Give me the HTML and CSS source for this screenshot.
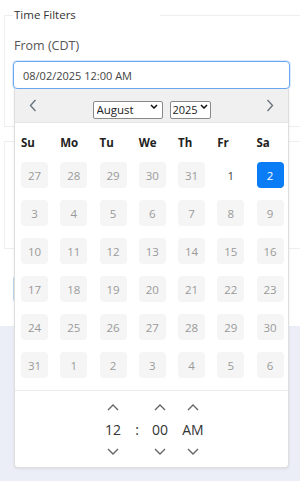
FILE: index.html
```html
<!DOCTYPE html>
<html lang="en">
<head>
    <meta charset="UTF-8">
    <meta name="viewport" content="width=device-width, initial-scale=1.0">
    <title>Time Filters</title>
    <link rel="stylesheet" href="styles.css">
</head>
<body>
    <div class="page">
        <fieldset class="filters">
            <legend>Time Filters</legend>
            <label class="field-label" for="fromDate">From (CDT)</label>
            <div class="picker">
                <input type="text" id="fromDate" class="date-input" value="08/02/2025 12:00 AM">

                <div class="popup">
                    <div class="popup-head">
                        <button type="button" class="nav prev">
                            <svg width="8" height="13" viewBox="0 0 8 13"><path d="M6.5 1 L1.5 6.5 L6.5 12" fill="none" stroke="#6c757d" stroke-width="1.4"/></svg>
                        </button>
                        <div class="selects">
                            <span class="select-wrap month">
                                <select>
                                    <option>August</option>
                                </select>
                                <svg class="caret" width="8" height="5" viewBox="0 0 8 5"><path d="M1 1 L4 4 L7 1" fill="none" stroke="#111" stroke-width="1.5"/></svg>
                            </span>
                            <span class="select-wrap year">
                                <select>
                                    <option>2025</option>
                                </select>
                                <svg class="caret" width="8" height="5" viewBox="0 0 8 5"><path d="M1 1 L4 4 L7 1" fill="none" stroke="#111" stroke-width="1.5"/></svg>
                            </span>
                        </div>
                        <button type="button" class="nav next">
                            <svg width="8" height="13" viewBox="0 0 8 13"><path d="M1.5 1 L6.5 6.5 L1.5 12" fill="none" stroke="#6c757d" stroke-width="1.4"/></svg>
                        </button>
                    </div>

                    <div class="weekdays">
                        <span>Su</span><span>Mo</span><span>Tu</span><span>We</span><span>Th</span><span>Fr</span><span>Sa</span>
                    </div>

                    <div class="days">
                        <span class="day off">27</span><span class="day off">28</span><span class="day off">29</span><span class="day off">30</span><span class="day off">31</span><span class="day">1</span><span class="day picked">2</span>
                        <span class="day off">3</span><span class="day off">4</span><span class="day off">5</span><span class="day off">6</span><span class="day off">7</span><span class="day off">8</span><span class="day off">9</span>
                        <span class="day off">10</span><span class="day off">11</span><span class="day off">12</span><span class="day off">13</span><span class="day off">14</span><span class="day off">15</span><span class="day off">16</span>
                        <span class="day off">17</span><span class="day off">18</span><span class="day off">19</span><span class="day off">20</span><span class="day off">21</span><span class="day off">22</span><span class="day off">23</span>
                        <span class="day off">24</span><span class="day off">25</span><span class="day off">26</span><span class="day off">27</span><span class="day off">28</span><span class="day off">29</span><span class="day off">30</span>
                        <span class="day off">31</span><span class="day off">1</span><span class="day off">2</span><span class="day off">3</span><span class="day off">4</span><span class="day off">5</span><span class="day off">6</span>
                    </div>

                    <div class="time">
                        <div class="time-col hour">
                            <svg class="arrow" width="12" height="7" viewBox="0 0 12 7"><path d="M1 6 L6 1 L11 6" fill="none" stroke="#666" stroke-width="1.4"/></svg>
                            <span>12</span>
                            <svg class="arrow" width="12" height="7" viewBox="0 0 12 7"><path d="M1 1 L6 6 L11 1" fill="none" stroke="#666" stroke-width="1.4"/></svg>
                        </div>
                        <div class="colon">:</div>
                        <div class="time-col minute">
                            <svg class="arrow" width="12" height="7" viewBox="0 0 12 7"><path d="M1 6 L6 1 L11 6" fill="none" stroke="#666" stroke-width="1.4"/></svg>
                            <span>00</span>
                            <svg class="arrow" width="12" height="7" viewBox="0 0 12 7"><path d="M1 1 L6 6 L11 1" fill="none" stroke="#666" stroke-width="1.4"/></svg>
                        </div>
                        <div class="time-col ampm">
                            <svg class="arrow" width="12" height="7" viewBox="0 0 12 7"><path d="M1 6 L6 1 L11 6" fill="none" stroke="#666" stroke-width="1.4"/></svg>
                            <span>AM</span>
                            <svg class="arrow" width="12" height="7" viewBox="0 0 12 7"><path d="M1 1 L6 6 L11 1" fill="none" stroke="#666" stroke-width="1.4"/></svg>
                        </div>
                    </div>
                </div>
            </div>
        </fieldset>

        <div class="card"></div>
        <div class="apply-row"><div class="ghost-btn"></div></div>
    </div>
    <div class="lower"></div>
</body>
</html>
```

FILE: styles.css
```css
html, body {
    margin: 0;
    padding: 0;
}
body {
    font-family: 'Open Sans', sans-serif;
    color: #333;
    background-color: #eceef7;
    overflow: hidden;
}
.page {
    background-color: #fff;
    padding-top: 8px;
    height: 318px;
    position: relative;
    z-index: 2;
}
.lower {
    height: 155px;
}
.filters {
    margin: 0 0 0 4px;
    padding: 0 0 37px 8px;
    border: 1px solid #eeeeee;
    border-right: none;
    min-width: 0;
}
.filters legend {
    width: 146px;
    padding: 0 0 0 1px;
    font-size: 11.5px;
    line-height: 14px;
    color: #333;
}
.field-label {
    display: block;
    margin: 15px 0 6px 1px;
    font-size: 12.5px;
    line-height: 18px;
    color: #555;
}
.picker {
    position: relative;
    width: 277px;
}
.date-input {
    display: block;
    box-sizing: border-box;
    width: 277px;
    height: 28px;
    margin: 0;
    padding: 0 9px;
    border: 1px solid #6aa8f2;
    border-radius: 4px;
    box-shadow: 0 0 0 1px rgba(106, 168, 242, 0.25);
    font-family: 'Open Sans', sans-serif;
    font-size: 11px;
    color: #444;
    outline: none;
}
.popup {
    position: absolute;
    top: 28px;
    left: 1px;
    z-index: 5;
    box-sizing: border-box;
    width: 275px;
    height: 379px;
    background-color: #fff;
    border: 1px solid #dedede;
    border-top: none;
    border-radius: 0 0 4px 4px;
    box-shadow: 0 1px 3px rgba(0, 0, 0, 0.08);
}
.popup-head {
    height: 34px;
    display: flex;
    align-items: center;
    justify-content: space-between;
    padding: 0 12px 0 12px;
    background-color: #f0f0f0;
    border-bottom: 1px solid #e6e6e6;
    box-sizing: border-box;
}
.nav {
    border: none;
    background: none;
    padding: 0 2px;
    display: flex;
    align-items: center;
}
.selects {
    display: flex;
    gap: 7px;
    padding-top: 1px;
}
.select-wrap {
    position: relative;
    display: block;
    height: 18px;
}
.select-wrap select {
    -webkit-appearance: none;
    appearance: none;
    width: 100%;
    height: 18px;
    box-sizing: border-box;
    margin: 0;
    font-family: 'Open Sans', sans-serif;
    font-size: 11.5px;
    line-height: 16px;
    color: #222;
    border: 1px solid #8a8a8a;
    border-radius: 2px;
    background-color: #fff;
    padding: 0 12px 0 3px;
    outline: none;
}
.caret {
    position: absolute;
    right: 5px;
    top: 7px;
    pointer-events: none;
}
.select-wrap.month {
    width: 70px;
}
.select-wrap.year {
    width: 41px;
}
.select-wrap.year select {
    padding: 0 9px 0 2px;
    font-size: 11px;
}
.select-wrap.year .caret {
    right: 3px;
}
.weekdays,
.days {
    display: grid;
    grid-template-columns: repeat(7, 27px);
    column-gap: 12.25px;
    padding-left: 6px;
}
.weekdays {
    padding-top: 12px;
    height: 16px;
    font-size: 11.5px;
    line-height: 16px;
    font-weight: bold;
    color: #222;
}
.days {
    margin-top: 11px;
    row-gap: 12px;
    grid-auto-rows: 26px;
}
.day {
    display: flex;
    align-items: center;
    justify-content: center;
    border-radius: 4px;
    font-size: 11.5px;
    color: #444;
}
.day.off {
    background-color: #f5f5f5;
    color: #9a9a9a;
}
.day.picked {
    background-color: #0a7cf5;
    color: #fff;
}
.time {
    margin-top: 12px;
    border-top: 1px solid #ebebeb;
    display: flex;
    justify-content: center;
    padding: 13px 0 0 3px;
}
.time-col {
    width: 28px;
    display: flex;
    flex-direction: column;
    align-items: center;
    font-size: 14px;
    color: #333;
}
.time-col span {
    height: 24px;
    line-height: 24px;
    margin: 7px 0 6px;
}
.time-col.minute {
    width: 26px;
}
.time-col.ampm {
    margin-left: 6px;
}
.colon {
    width: 20px;
    text-align: center;
    font-size: 14px;
    line-height: 24px;
    color: #333;
    padding-top: 14px;
}
.card {
    height: 106px;
    margin: 14px 0 0 4px;
    border: 1px solid #eeeeee;
    border-right: none;
}
.apply-row {
    padding: 26px 0 0 13px;
}
.ghost-btn {
    width: 120px;
    height: 26px;
    border: 1px solid #bcd6f2;
    border-radius: 4px;
}
```
